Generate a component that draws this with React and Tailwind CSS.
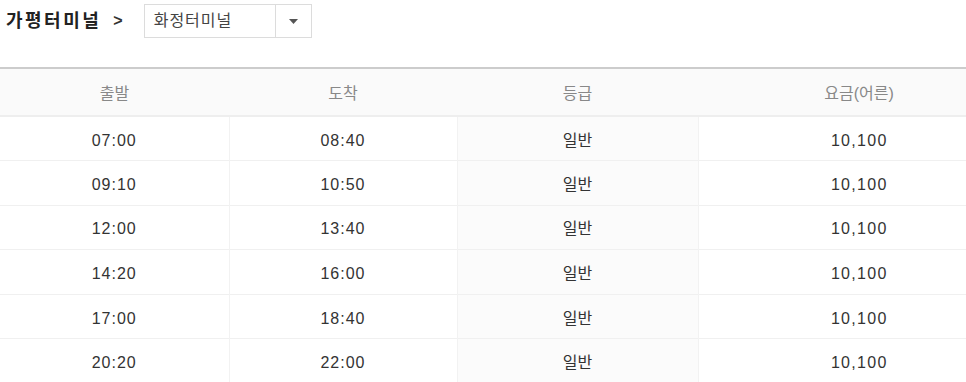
const ROWS = [
  { dep: "07:00", arr: "08:40", grade: "일반", fare: "10,100" },
  { dep: "09:10", arr: "10:50", grade: "일반", fare: "10,100" },
  { dep: "12:00", arr: "13:40", grade: "일반", fare: "10,100" },
  { dep: "14:20", arr: "16:00", grade: "일반", fare: "10,100" },
  { dep: "17:00", arr: "18:40", grade: "일반", fare: "10,100" },
  { dep: "20:20", arr: "22:00", grade: "일반", fare: "10,100" },
];

const FONT = "font-['Liberation_Sans','Noto_Sans_CJK_KR',sans-serif]";

export default function App() {
  return (
    <div className={`w-[966px] h-[382px] overflow-hidden bg-white ${FONT}`}>
      {/* Route selector */}
      <div className="flex items-center h-[42px] pt-[4px] pb-[4px]">
        <span className="ml-[6px] text-[18px] font-bold text-[#222] tracking-[2.5px]">가평터미널</span>
        <span className="ml-[12px] text-[16px] font-bold text-[#333]">&gt;</span>
        <div className="ml-[21px] flex h-[34px] w-[168px] border border-[#dcdcdc] bg-white">
          <span className="flex-1 flex items-center pl-[9px] text-[16px] text-[#444] tracking-[1px]">화정터미널</span>
          <span className="w-[36px] border-l border-[#dcdcdc] flex items-center justify-center">
            <svg width="9" height="5" viewBox="0 0 9 5"><path d="M0 0h9L4.5 5z" fill="#555" /></svg>
          </span>
        </div>
      </div>

      {/* Timetable */}
      <table className="mt-[25px] w-[1020px] border-collapse table-fixed border-t-2 border-[#cccccc]">
        <colgroup>
          <col className="w-[229px]" />
          <col className="w-[228px]" />
          <col className="w-[241px]" />
          <col className="w-[322px]" />
        </colgroup>
        <thead>
          <tr className="h-[48px] bg-[#fafafa] border-b-2 border-[#eeeeee]">
            {["출발", "도착", "등급", "요금(어른)"].map((h) => (
              <th key={h} className="pt-[4px] font-normal text-[16px] text-[#888]">{h}</th>
            ))}
          </tr>
        </thead>
        <tbody>
          {ROWS.map((r, i) => (
            <tr key={i} className="h-[44.6px] border-b border-[#f0f0f0] text-[16px] text-[#333] tracking-[1px]">
              <td className="pt-[4px] text-center">{r.dep}</td>
              <td className="pt-[4px] text-center border-l border-[#f2f2f2]">{r.arr}</td>
              <td className="pt-[4px] text-center border-l border-[#f2f2f2] bg-[#fbfbfb] tracking-normal">{r.grade}</td>
              <td className="pt-[4px] text-center border-l border-[#f2f2f2] tracking-[1.3px]">{r.fare}</td>
            </tr>
          ))}
        </tbody>
      </table>
    </div>
  );
}
